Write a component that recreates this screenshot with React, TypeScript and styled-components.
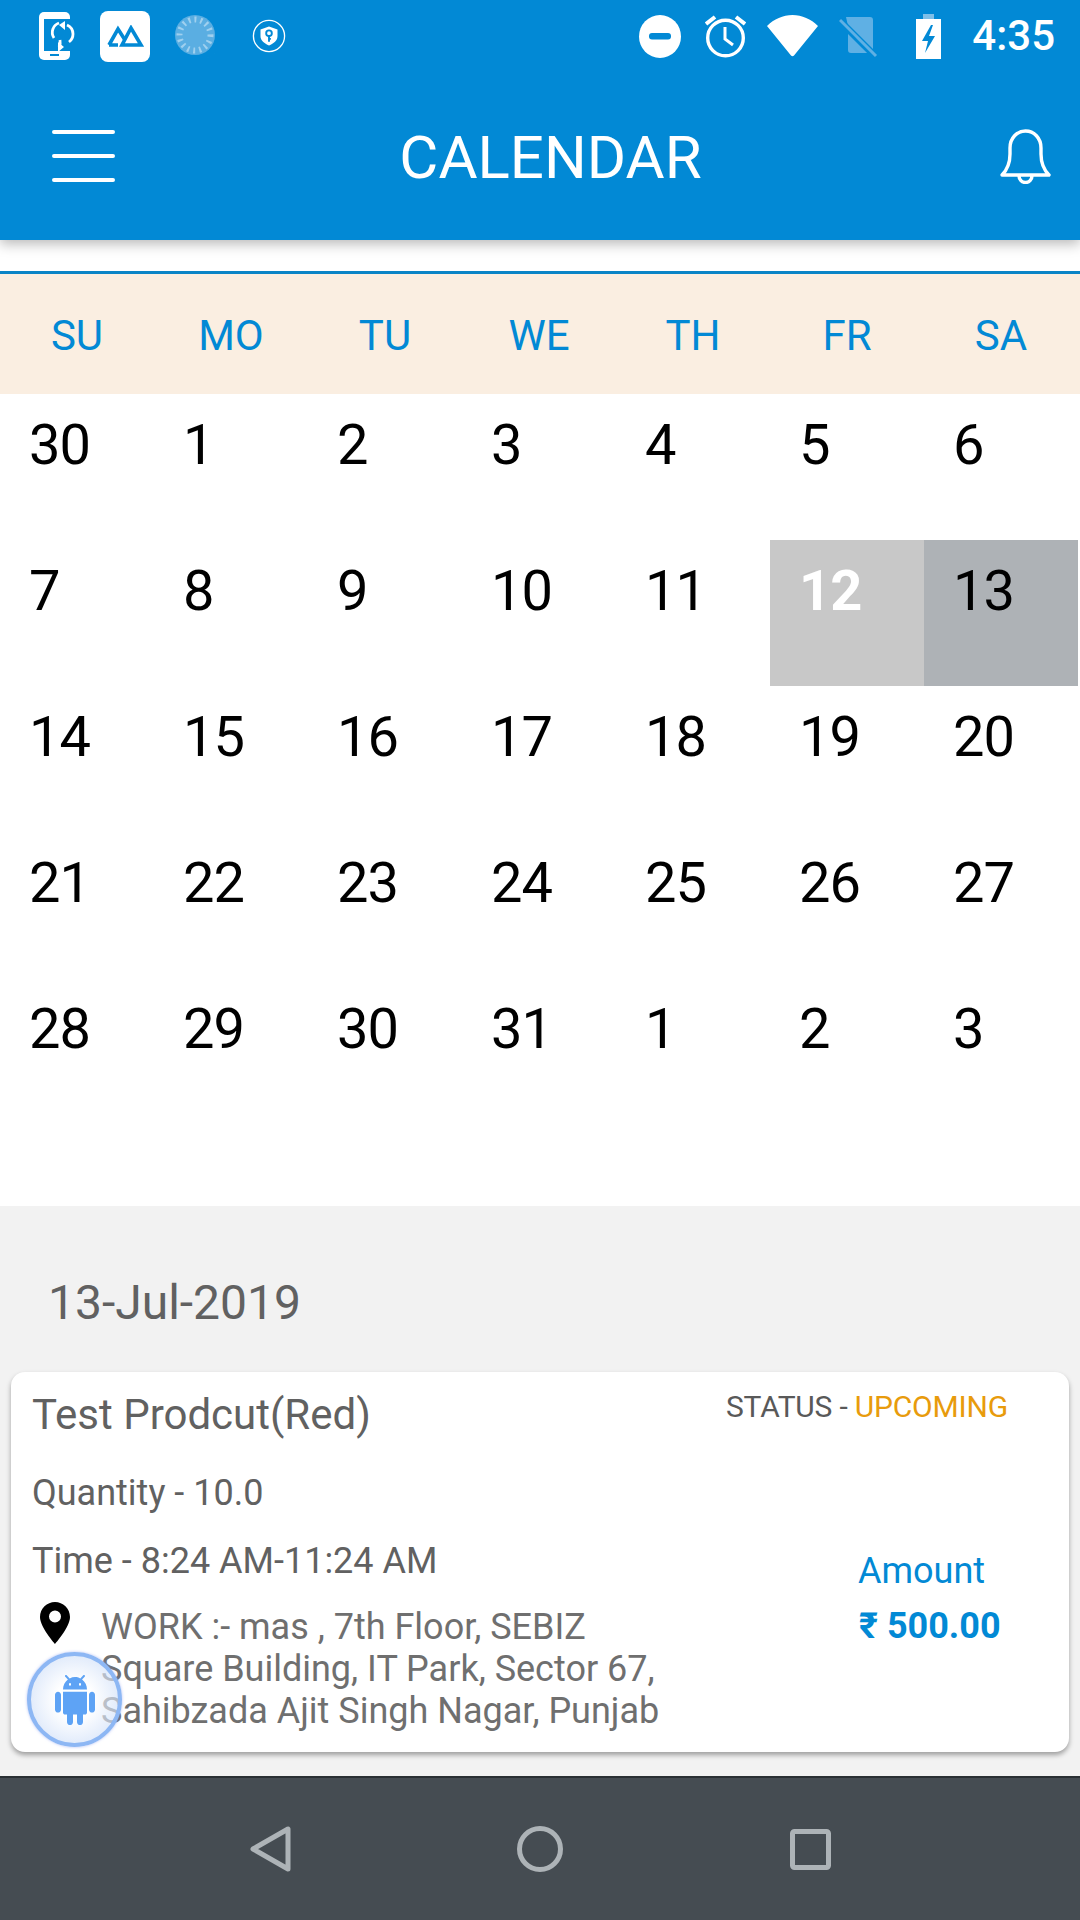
import { FC } from 'react';
import styled, { createGlobalStyle } from 'styled-components';

const DAY_NAMES = ['SU', 'MO', 'TU', 'WE', 'TH', 'FR', 'SA'];
const DAYS = [
  30, 1, 2, 3, 4, 5, 6, 7, 8, 9, 10, 11, 12, 13, 14, 15, 16, 17, 18, 19, 20, 21,
  22, 23, 24, 25, 26, 27, 28, 29, 30, 31, 1, 2, 3,
];

const blue = '#0289d5';

const GlobalStyle = createGlobalStyle`
  html, body {
    margin: 0;
    padding: 0;
    background: #fff;
    font-family: Roboto, "Liberation Sans", sans-serif;
  }
`;

const StatusLeft: FC = () => (
  <SStatusGroup>
    <svg width="36" height="48" viewBox="0 0 36 48">
      <rect x="0" y="0" width="31" height="48" rx="5" fill="#fff" />
      <rect x="5" y="7" width="26" height="32" fill={blue} />
      <rect x="11" y="42" width="9" height="2" fill={blue} />
      <path d="M15 26a10 10 0 0 1 5-15" fill="none" stroke="#fff" strokeWidth="2.800" />
      <path d="M28 13a10 10 0 0 1 6 9 10 10 0 0 1-4 8" fill="none" stroke="#fff" strokeWidth="2.800" />
      <path d="M21 28a10 10 0 0 1-1 7" fill="none" stroke="#fff" strokeWidth="2.800" />
      <path d="M26 9l-6 4 6 5zM19 30l6 5-6 5z" fill="#fff" />
    </svg>
    <SAppTile>
      <svg width="38" height="22" viewBox="0 0 38 22">
        <path d="M3 20L12 4l7 11M3 20h9" fill="none" stroke={blue} strokeWidth="3.600" />
        <path d="M16 20h19L25 3z" fill="none" stroke={blue} strokeWidth="3.600" />
      </svg>
    </SAppTile>
    <svg width="42" height="44" viewBox="0 0 42 44">
      <circle cx="20" cy="21" r="20" fill="#5aaee2" />
      <path d="M36 8a20 20 0 0 1-22 34 19 19 0 0 0 22-34z" fill="#dcedf8" />
      <circle cx="20" cy="21" r="15.500" fill="none" stroke="#9fd0ef" strokeWidth="6" strokeDasharray="2 4" />
    </svg>
    <SShield>
      <svg width="34" height="36" viewBox="0 0 36 36">
        <circle cx="18" cy="18" r="16.500" fill="none" stroke="#fff" strokeWidth="1.400" />
        <path d="M18 8l9 3v7c0 5-4 8-9 10-5-2-9-5-9-10v-7z" fill="#fff" />
        <circle cx="18" cy="15" r="3" fill="none" stroke={blue} strokeWidth="2" />
        <path d="M18 17v7M18 21h2" stroke={blue} strokeWidth="2" />
      </svg>
    </SShield>
  </SStatusGroup>
);

const StatusRight: FC = () => (
  <SStatusRight>
    <SDnd>
      <svg width="42" height="43" viewBox="0 0 42 43">
        <ellipse cx="21" cy="21.500" rx="21" ry="21.500" fill="#fff" />
        <rect x="10" y="18" width="22" height="6.500" rx="3" fill={blue} />
      </svg>
    </SDnd>
    <svg width="41" height="44" viewBox="0 0 41 44">
      <circle cx="20.500" cy="24" r="17.800" fill="none" stroke="#fff" strokeWidth="3.400" />
      <path d="M20 13v12l8 6" fill="none" stroke="#fff" strokeWidth="3" />
      <path d="M1 10l9-7M40 10l-9-7" stroke="#fff" strokeWidth="4" />
    </svg>
    <svg width="51" height="42" viewBox="0 0 51 42">
      <path d="M0 11C7 4 16 0 25.500 0S44 4 51 11L27 40.500c-.8 1-2.200 1-3 0z" fill="#fff" />
    </svg>
    <svg width="39" height="43" viewBox="0 0 39 43">
      <path d="M7 2h24a3 3 0 0 1 3 3v33H12a3 3 0 0 1-3-3V11z" fill="#5fb0e4" />
      <path d="M1 6l36 36" stroke={blue} strokeWidth="7" />
      <path d="M1 5l36 36" stroke="#5fb0e4" strokeWidth="3" />
    </svg>
    <SBattery>
      <svg width="25" height="45" viewBox="0 0 25 45">
        <path d="M7 0h11v5h7v40H0V5h7z" fill="#fff" />
        <path d="M7 0h11v5H7z" fill="#7fbfe8" />
        <path d="M15 11L6 27h6l-3 12 10-17h-6l4-11z" fill={blue} />
      </svg>
    </SBattery>
    <STime>4:35</STime>
  </SStatusRight>
);

const MenuIcon: FC = () => (
  <svg width="63" height="52" viewBox="0 0 63 52">
    <path d="M2 2h59M2 26h59M2 50h59" stroke="#fff" strokeWidth="4" strokeLinecap="round" />
  </svg>
);

const BellIcon: FC = () => (
  <svg width="51" height="55" viewBox="0 0 51 55">
    <path
      d="M2 46c6-6 8-12 8-21V19C10 9 17 2 25.500 2S41 9 41 19v6c0 9 2 15 8 21zM19 47a6.500 6.500 0 0 0 13 0"
      fill="none"
      stroke="#fff"
      strokeWidth="3.400"
      strokeLinejoin="round"
    />
  </svg>
);

const PinIcon: FC = () => (
  <svg width="30" height="42" viewBox="0 0 30 42">
    <path d="M15 0C7 0 0 6.500 0 15c0 10 15 27 15 27s15-17 15-27C30 6.500 23 0 15 0zm0 20.500a6 6 0 1 1 0-12 6 6 0 0 1 0 12z" fill="#000" />
  </svg>
);

const AndroidIcon: FC = () => (
  <svg width="48" height="50" viewBox="0 0 24 24" preserveAspectRatio="none">
    <path
      d="M6 18c0 .55.45 1 1 1h1v3.500c0 .83.67 1.500 1.500 1.500s1.500-.67 1.500-1.500V19h2v3.500c0 .83.67 1.500 1.500 1.500s1.500-.67 1.500-1.500V19h1c.55 0 1-.45 1-1V8H6v10zM3.500 8C2.670 8 2 8.670 2 9.500v7c0 .83.67 1.500 1.500 1.500S5 17.330 5 16.500v-7C5 8.670 4.330 8 3.500 8zm17 0c-.83 0-1.500.67-1.500 1.500v7c0 .83.67 1.500 1.500 1.500s1.500-.67 1.500-1.500v-7c0-.83-.67-1.500-1.500-1.500zm-4.970-5.840l1.300-1.300c.2-.2.2-.51 0-.71-.2-.2-.51-.2-.71 0l-1.480 1.480C13.850 1.230 12.950 1 12 1c-.96 0-1.860.23-2.660.63L7.850.15c-.2-.2-.51-.2-.71 0-.2.2-.2.51 0 .71l1.310 1.310C6.970 3.260 6 5.010 6 7h12c0-1.990-.97-3.750-2.470-4.840zM10 5H9V4h1v1zm5 0h-1V4h1v1z"
      fill="#5ea3f5"
    />
  </svg>
);

export default function App() {
  return (
    <SPage>
      <GlobalStyle />
      <SHeader>
        <SStatusBar>
          <StatusLeft />
          <StatusRight />
        </SStatusBar>
        <SToolbar>
          <MenuIcon />
          <STitle>CALENDAR</STitle>
          <BellIcon />
        </SToolbar>
      </SHeader>

      <SCalendar>
        <SWeekRow>
          {DAY_NAMES.map((name) => (
            <SWeekDay key={name}>{name}</SWeekDay>
          ))}
        </SWeekRow>
        <SDaysGrid>
          {DAYS.map((day, i) => (
            <SDay key={i} $tone={i === 12 ? 'range' : i === 13 ? 'picked' : undefined}>
              {day}
            </SDay>
          ))}
        </SDaysGrid>
      </SCalendar>

      <SDetails>
        <SDateLabel>13-Jul-2019</SDateLabel>
        <SCard>
          <SCardLeft>
            <SProduct>Test Prodcut(Red)</SProduct>
            <SInfo>Quantity - 10.0</SInfo>
            <SInfo $tight>Time - 8:24 AM-11:24 AM</SInfo>
            <SAddressRow>
              <SPin>
                <PinIcon />
              </SPin>
              <SAddress>
                WORK :- mas , 7th Floor, SEBIZ
                <br />
                Square Building, IT Park, Sector 67,
                <br />
                Sahibzada Ajit Singh Nagar, Punjab
              </SAddress>
            </SAddressRow>
          </SCardLeft>
          <SCardRight>
            <SStatus>
              STATUS - <SUpcoming>UPCOMING</SUpcoming>
            </SStatus>
            <SAmountLabel>Amount</SAmountLabel>
            <SPrice>₹ 500.00</SPrice>
          </SCardRight>
          <SFab>
            <AndroidIcon />
          </SFab>
        </SCard>
      </SDetails>

      <SNavBar>
        <svg width="41" height="46" viewBox="0 0 41 46">
          <path d="M38 3v40L3 23z" fill="none" stroke="#adb3b7" strokeWidth="5" strokeLinejoin="round" />
        </svg>
        <svg width="46" height="46" viewBox="0 0 46 46">
          <circle cx="23" cy="23" r="20.500" fill="none" stroke="#adb3b7" strokeWidth="5" />
        </svg>
        <svg width="41" height="41" viewBox="0 0 41 41">
          <rect x="2.500" y="2.500" width="36" height="36" rx="2" fill="none" stroke="#adb3b7" strokeWidth="5" />
        </svg>
      </SNavBar>
    </SPage>
  );
}

const SPage = styled.div`
  width: 1080px;
  height: 1920px;
  display: flex;
  flex-direction: column;
  overflow: hidden;
  background: #fff;
`;

const SHeader = styled.header`
  height: 240px;
  flex: none;
  background: ${blue};
  box-shadow: 0 4px 12px rgba(0, 0, 0, 0.28);
  position: relative;
  z-index: 1;
`;

const SStatusBar = styled.div`
  height: 72px;
  display: flex;
  justify-content: space-between;
  align-items: center;
  padding: 0 25px 0 39px;
`;

const SStatusGroup = styled.div`
  display: flex;
  align-items: center;
  gap: 25px;
`;

const SAppTile = styled.div`
  width: 50px;
  height: 51px;
  border-radius: 8px;
  background: #fff;
  display: flex;
  align-items: center;
  justify-content: center;
`;

const SShield = styled.div`
  display: flex;
  margin-left: 10px;
`;

const SStatusRight = styled.div`
  display: flex;
  align-items: center;
  gap: 21px;
`;

const SDnd = styled.div`
  display: flex;
  margin-right: 3px;
`;

const SBattery = styled.div`
  display: flex;
  margin-left: 17px;
  margin-right: 10px;
`;

const STime = styled.div`
  font-size: 42px;
  font-weight: 500;
  color: #fff;
  line-height: 48px;
`;

const SToolbar = styled.div`
  display: flex;
  align-items: center;
  justify-content: space-between;
  padding: 58px 29px 0 52px;
  height: 52px;
`;

const STitle = styled.h1`
  margin: 4px 14px 0 0;
  font-size: 60px;
  font-weight: 400;
  color: #fff;
  line-height: 68px;
`;

const SCalendar = styled.section`
  flex: none;
  padding-top: 31px;
  height: 966px;
  box-sizing: border-box;
`;

const SWeekRow = styled.div`
  height: 123px;
  box-sizing: border-box;
  display: grid;
  grid-template-columns: repeat(7, 154px);
  align-items: center;
  background: #faeee1;
  border-top: 3px solid #0a84c6;
`;

const SWeekDay = styled.div`
  padding-top: 2px;
  font-size: 42px;
  color: ${blue};
  text-align: center;
`;

const SDaysGrid = styled.div`
  display: grid;
  grid-template-columns: repeat(7, 154px);
  grid-auto-rows: 146px;
`;

const SDay = styled.div<{ $tone?: 'range' | 'picked' }>`
  padding: 18px 0 0 29px;
  box-sizing: border-box;
  font-size: 56px;
  line-height: 66px;
  letter-spacing: -1px;
  color: ${(p) => (p.$tone === 'range' ? '#fff' : '#000')};
  font-weight: ${(p) => (p.$tone === 'range' ? 700 : 400)};
  background: ${(p) =>
    p.$tone === 'range' ? '#c8c8c8' : p.$tone === 'picked' ? '#aeb2b6' : 'transparent'};
`;

const SDetails = styled.section`
  flex: 1;
  background: #f2f2f2;
  padding: 0 11px;
  border-bottom: 2px solid #2a3034;
`;

const SDateLabel = styled.div`
  padding: 69px 0 0 37px;
  height: 97px;
  font-size: 48px;
  line-height: 56px;
  color: #616161;
`;

const SCard = styled.article`
  position: relative;
  height: 380px;
  box-sizing: border-box;
  padding: 19px 0 0 21px;
  display: flex;
  justify-content: space-between;
  background: #fff;
  border-radius: 14px;
  box-shadow: 0 3px 5px rgba(0, 0, 0, 0.35);
`;

const SCardLeft = styled.div`
  display: flex;
  flex-direction: column;
`;

const SProduct = styled.div`
  font-size: 42px;
  line-height: 48px;
  color: #616161;
`;

const SInfo = styled.div<{ $tight?: boolean }>`
  margin-top: ${(p) => (p.$tight ? '26px' : '33px')};
  font-size: 36px;
  line-height: 42px;
  color: #616161;
`;

const SAddressRow = styled.div`
  display: flex;
  margin-top: 20px;
`;

const SPin = styled.div`
  width: 69px;
  padding-left: 8px;
  box-sizing: border-box;
  flex: none;
`;

const SAddress = styled.div`
  padding-top: 4px;
  font-size: 36px;
  line-height: 42px;
  color: #6f6f6f;
`;

const SCardRight = styled.div`
  width: 343px;
  flex: none;
`;

const SStatus = styled.div`
  margin-top: -2px;
  font-size: 30px;
  line-height: 36px;
  letter-spacing: -0.2px;
  color: #595959;
`;

const SUpcoming = styled.span`
  color: #e89b0c;
`;

const SAmountLabel = styled.div`
  margin: 125px 0 0 132px;
  font-size: 36px;
  line-height: 42px;
  color: ${blue};
`;

const SPrice = styled.div`
  margin: 13px 0 0 133px;
  font-size: 36px;
  line-height: 42px;
  font-weight: 700;
  color: ${blue};
`;

const SFab = styled.div`
  position: absolute;
  left: 16px;
  top: 280px;
  width: 95px;
  height: 95px;
  box-sizing: border-box;
  border-radius: 50%;
  border: 4px solid #8db7f4;
  background: radial-gradient(circle, rgba(255, 255, 255, 0.6) 30%, rgba(185, 208, 245, 0.7) 100%);
  box-shadow: 0 0 3px rgba(130, 150, 240, 0.6);
  display: flex;
  align-items: center;
  justify-content: center;
`;

const SNavBar = styled.nav`
  height: 142px;
  flex: none;
  background: #454c52;
  display: grid;
  grid-template-columns: repeat(3, 270px);
  justify-content: center;
  justify-items: center;
  align-items: center;
`;
